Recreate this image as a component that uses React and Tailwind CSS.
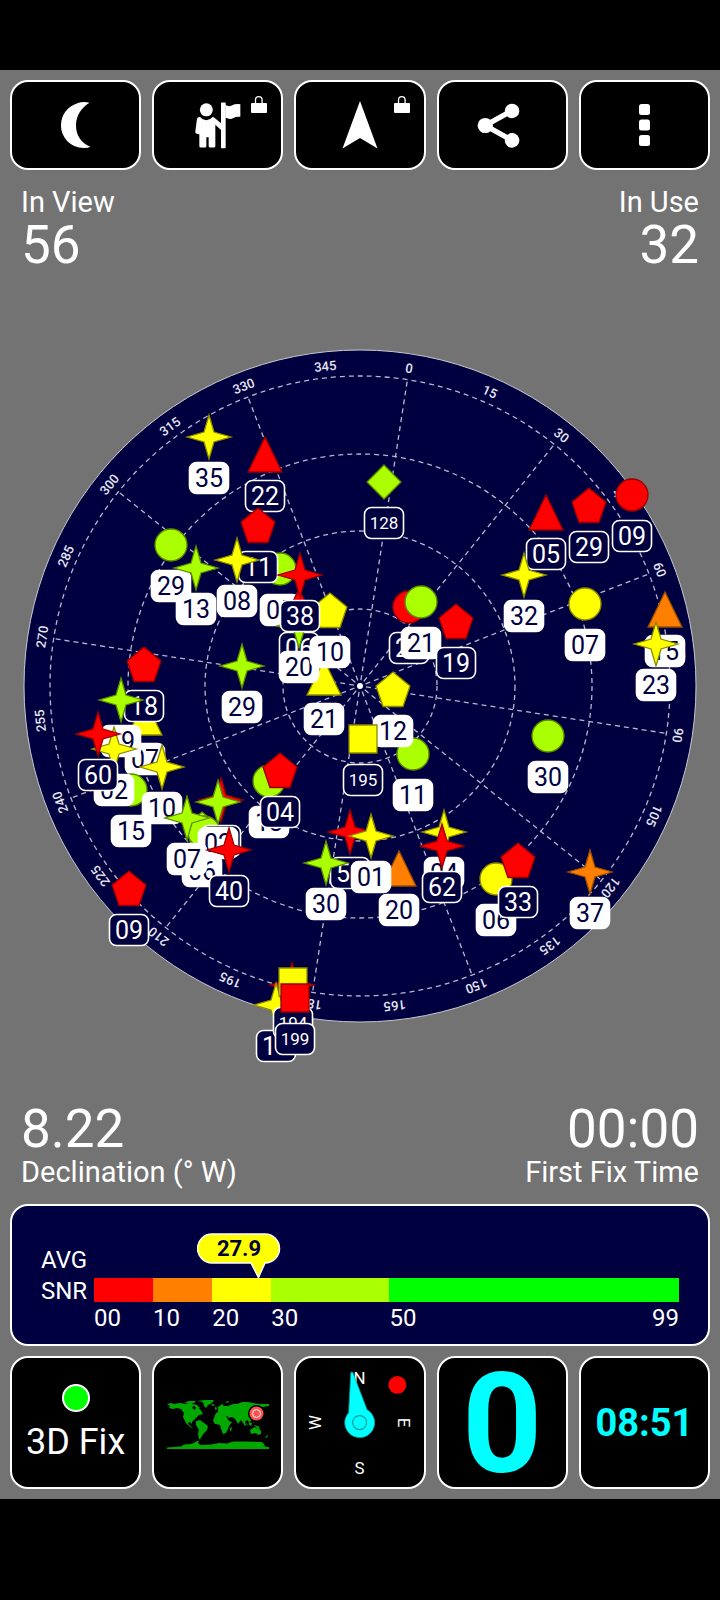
import React from 'react';

const RED = '#ff0000';
const ORANGE = '#ff8000';
const YELLOW = '#ffff00';
const LIME = '#aaff00';

const EDGE = {
  [RED]: '#990000',
  [ORANGE]: '#994d00',
  [YELLOW]: '#8a8a00',
  [LIME]: '#5c8a00',
};

// x and y are measured from the centre of the plot, later entries lie on top
const satellites = [
  { shape: 'star', color: YELLOW, x: -151, y: -249, id: '35', used: true },
  { shape: 'triangle', color: RED, x: -95, y: -231, id: '22' },
  { shape: 'diamond', color: LIME, x: 24, y: -204, id: '128' },
  { shape: 'circle', color: LIME, x: -80, y: -117, id: '05', used: true },
  { shape: 'pentagon', color: RED, x: -102, y: -160, id: '11' },
  { shape: 'circle', color: LIME, x: -189, y: -141, id: '29', used: true },
  { shape: 'star', color: LIME, x: -164, y: -118, id: '13', used: true },
  { shape: 'star', color: YELLOW, x: -123, y: -126, id: '08', used: true },
  { shape: 'triangle', color: YELLOW, x: -36, y: -8, id: '21', used: true },
  { shape: 'triangle', color: RED, x: -61, y: -79, id: '06' },
  { shape: 'star', color: LIME, x: -61, y: -60, id: '20', used: true },
  { shape: 'pentagon', color: YELLOW, x: -30, y: -75, id: '10', used: true },
  { shape: 'star', color: RED, x: -60, y: -111, id: '38' },
  { shape: 'circle', color: RED, x: 49, y: -79, id: '27' },
  { shape: 'circle', color: LIME, x: 61, y: -84, id: '21', used: true },
  { shape: 'pentagon', color: RED, x: 96, y: -64, id: '19' },
  { shape: 'triangle', color: RED, x: 186, y: -173, id: '05' },
  { shape: 'pentagon', color: RED, x: 229, y: -180, id: '29' },
  { shape: 'circle', color: RED, x: 272, y: -191, id: '09' },
  { shape: 'star', color: YELLOW, x: 164, y: -111, id: '32', used: true },
  { shape: 'circle', color: YELLOW, x: 225, y: -82, id: '07', used: true },
  { shape: 'triangle', color: ORANGE, x: 305, y: -76, id: '15', used: true },
  { shape: 'star', color: YELLOW, x: 296, y: -42, id: '23', used: true },
  { shape: 'star', color: LIME, x: -118, y: -20, id: '29', used: true },
  { shape: 'triangle', color: YELLOW, x: -215, y: 32, id: '07', used: true },
  { shape: 'pentagon', color: RED, x: -216, y: -21, id: '18' },
  { shape: 'star', color: LIME, x: -239, y: 14, id: '19', used: true },
  { shape: 'circle', color: LIME, x: -229, y: 104, id: '15', used: true },
  { shape: 'star', color: YELLOW, x: -246, y: 63, id: '02', used: true },
  { shape: 'star', color: RED, x: -262, y: 48, id: '60' },
  { shape: 'star', color: YELLOW, x: -198, y: 81, id: '10', used: true },
  { shape: 'pentagon', color: LIME, x: -158, y: 144, id: '06', used: true },
  { shape: 'circle', color: LIME, x: -156, y: 146 },
  { shape: 'star', color: RED, x: -139, y: 114, id: '02' },
  { shape: 'star', color: LIME, x: -142, y: 116, id: '02', used: true },
  { shape: 'star', color: LIME, x: -173, y: 132, id: '07', used: true },
  { shape: 'star', color: RED, x: -131, y: 164, id: '40' },
  { shape: 'pentagon', color: RED, x: -231, y: 203, id: '09' },
  { shape: 'circle', color: LIME, x: 53, y: 68, id: '11', used: true },
  { shape: 'pentagon', color: YELLOW, x: 33, y: 4, id: '12', used: true },
  { shape: 'square', color: YELLOW, x: 3, y: 53, id: '195' },
  { shape: 'circle', color: LIME, x: -91, y: 95, id: '13', used: true },
  { shape: 'pentagon', color: RED, x: -80, y: 85, id: '04' },
  { shape: 'star', color: RED, x: -10, y: 146, id: '51' },
  { shape: 'triangle', color: ORANGE, x: 39, y: 183, id: '20', used: true },
  { shape: 'star', color: YELLOW, x: 11, y: 150, id: '01', used: true },
  { shape: 'star', color: LIME, x: -34, y: 177, id: '30', used: true },
  { shape: 'star', color: YELLOW, x: 84, y: 146, id: '04', used: true },
  { shape: 'star', color: RED, x: 82, y: 160, id: '62' },
  { shape: 'circle', color: LIME, x: 188, y: 50, id: '30', used: true },
  { shape: 'circle', color: YELLOW, x: 136, y: 193, id: '06', used: true },
  { shape: 'pentagon', color: RED, x: 158, y: 175, id: '33' },
  { shape: 'star', color: ORANGE, x: 230, y: 186, id: '37', used: true },
  { shape: 'star', color: RED, x: -68, y: 299 },
  { shape: 'star', color: YELLOW, x: -84, y: 319, id: '18' },
  { shape: 'square', color: YELLOW, x: -67, y: 296, id: '194' },
  { shape: 'square', color: RED, x: -65, y: 312, id: '199' },
];

const outlines = {
  star: '0,-22 5,-5 22,0 5,5 0,22 -5,5 -22,0 -5,-5',
  triangle: '0,-18 17,17 -17,17',
  pentagon: '0,-18 17,-4 10,16.5 -10,16.5 -17,-4',
  diamond: '0,-17 17,0 0,17 -17,0',
  square: '-14,-14 14,-14 14,14 -14,14',
};

const HEADING = 8.8;
const rings = [77, 155, 232, 310];
const spokes = Array.from({ length: 12 }, (_, i) => i * 30);
const bearings = Array.from({ length: 24 }, (_, i) => i * 15);

const snrBands = [
  { label: '00', span: 10, bar: 'bg-[#ff0000]' },
  { label: '10', span: 10, bar: 'bg-[#ff8000]' },
  { label: '20', span: 10, bar: 'bg-[#ffff00]' },
  { label: '30', span: 20, bar: 'bg-[#aaff00]' },
  { label: '50', end: '99', span: 49, bar: 'bg-[#00ff00]' },
];

function Satellite({ shape, color, x, y, id, used }) {
  return (
    <g transform={`translate(${x} ${y})`}>
      {shape === 'circle' ? (
        <circle r="16" fill={color} stroke={EDGE[color]} strokeWidth="1.3" />
      ) : (
        <polygon points={outlines[shape]} fill={color} stroke={EDGE[color]} strokeWidth="1.3" />
      )}
      {id && (
        <>
          <rect
            x="-19.5"
            y="25.5"
            width="39"
            height="31"
            rx="7"
            fill={used ? '#ffffff' : '#000040'}
            stroke="#ffffff"
            strokeWidth="1.6"
          />
          <text
            y={id.length > 2 ? 47 : 50}
            textAnchor="middle"
            fontSize={id.length > 2 ? 17 : 25}
            fill={used ? '#000040' : '#ffffff'}
          >
            {id}
          </text>
        </>
      )}
    </g>
  );
}

function SkyPlot() {
  return (
    <svg viewBox="-360 -344 720 744" className="mt-[72px] block w-full" role="img" aria-label="Satellite sky view">
      <circle r="336" fill="#000040" stroke="#c8c8d0" strokeWidth="1" />
      <g fill="none" stroke="#b8b8cc" strokeWidth="1.3" strokeDasharray="5 4">
        {rings.map((r) => (
          <circle key={r} r={r} />
        ))}
        {spokes.map((deg) => (
          <line key={deg} y1="-6" y2="-310" transform={`rotate(${deg + HEADING})`} />
        ))}
      </g>
      <circle r="3" fill="#ffffff" />
      <g fill="#e6e6f0" fontSize="13" fontWeight="500" textAnchor="middle">
        {bearings.map((deg) => (
          <text key={deg} y="-317" transform={`rotate(${deg + HEADING})`}>
            {deg}
          </text>
        ))}
      </g>
      {satellites.map((sat, i) => (
        <Satellite key={i} {...sat} />
      ))}
    </svg>
  );
}

function ToolButton({ label, locked, children }) {
  return (
    <button
      aria-label={label}
      className="relative flex h-[90px] items-center justify-center rounded-[18px] border-2 border-white bg-black"
    >
      {children}
      {locked && (
        <svg viewBox="0 0 16 17" className="absolute right-3.5 top-3.5 h-[17px] w-4">
          <rect x="0" y="7" width="16" height="10" rx="1" fill="#fff" />
          <path d="M4.5 7V4a3.3 3.3 0 0 1 6.6 0v3" fill="none" stroke="#fff" strokeWidth="1.3" />
        </svg>
      )}
    </button>
  );
}

function Tile({ label, children }) {
  return (
    <button
      aria-label={label}
      className="flex h-[133px] flex-col items-center justify-center rounded-[18px] border-2 border-white bg-black"
    >
      {children}
    </button>
  );
}

function Stat({ label, value, labelFirst, right }) {
  return (
    <div className={right ? 'flex flex-col text-right' : 'flex flex-col'}>
      {labelFirst && <span className="text-[29px] leading-9">{label}</span>}
      <span className="text-[53px] leading-[50px]">{value}</span>
      {!labelFirst && <span className="text-[29px] leading-9">{label}</span>}
    </div>
  );
}

function SnrPanel() {
  return (
    <section className="mx-2.5 mt-3.5 flex rounded-[18px] border-2 border-white bg-[#000040] px-[29px] pb-3 text-2xl">
      <div className="w-[53px] pt-[39px] leading-[31px]">
        <div>AVG</div>
        <div>SNR</div>
      </div>
      <div className="flex-1 pt-[27px]">
        <div className="relative h-[45px]">
          <svg
            viewBox="0 0 84 46"
            className="absolute left-[28%] top-0 h-[46px] w-[84px] -translate-x-[61px]"
          >
            <path
              d="M15 1h53a14.5 14.5 0 0 1 0 29L61.5 44.5 54 30H15a14.5 14.5 0 0 1 0-29z"
              fill="#ffff00"
              stroke="#fff"
              strokeWidth="1.5"
            />
            <text x="42" y="23" textAnchor="middle" fontSize="22" fontWeight="700" fill="#000040">
              27.9
            </text>
          </svg>
        </div>
        <div className="flex h-6">
          {snrBands.map((band) => (
            <div key={band.label} className={band.bar} style={{ flex: `${band.span} 1 0%` }} />
          ))}
        </div>
        <div className="mt-0.5 flex leading-7">
          {snrBands.map((band) => (
            <div key={band.label} className="flex justify-between" style={{ flex: `${band.span} 1 0%` }}>
              <span>{band.label}</span>
              {band.end && <span>{band.end}</span>}
            </div>
          ))}
        </div>
      </div>
    </section>
  );
}

function WorldMap() {
  return (
    <svg viewBox="0 0 102 49" className="mt-1 h-[49px] w-[102px]">
      <g fill="#00a800">
        <path d="M0 4l4-1 3 1 6-1 6 1 5-1 3 2-2 3 3 2 1-4 3 2 3 4 1 2-4 1-3 3-2 2-2 2 0 2-2-2-2 1 2 3 2 1 1 1-3-1-4-4-3-6 1-4-3-4-4-1-4 1-4-1 1-2z" />
        <path d="M18 2l5-1 6 0-2 2-6 1zM26 4l4 1 3 3-3 0-3-2z" />
        <path d="M30 1l8-1 9 0-2 3-4 2-2 3-2-2-1-4z" />
        <path d="M44 5l2-1 2 1-2 1z" />
        <path d="M29 21l4-1 4 3 4 3-1 4-3 3-2 3-2 3 1 1-2-1-1-5 1-4-3-5z" />
        <path d="M51 10l0-3 4-3 2 2 4 0 5-2 4 0 5-2 6 0 5 1 7 1 9 0v2l-6 1-3 0-3 4-1 3-3 3-2 4-2 1-2-2-2 2 1 3-1 1-2-3-2-3-3 4-1-2-2-3-3-2-3 1-2-2-4 0-3-1-3 0-2 1 1-3 2-1z" />
        <path d="M48 8l1-2 1 3-2 1zM58 2l4-1-1 2z" />
        <path d="M48 15l5-1 6 2 3 5 3 1-3 4-1 3-2 4-3 1-2-5-1-4-5-1-2-3z" />
        <path d="M63 28l2-1-1 4-1 0zM79 22l2 3-1 0zM82 22l3 1-1 3-2-1zM87 25l4 1 2 2-3 0zM87 17l1-3 1 2zM86 20l1 3-1-1z" />
        <path d="M83 30l3-2 2-1 2 2 1-2 3 4 0 3-3 1-2-2-5 1zM98 37l3-2v1l-2 2z" />
        <path d="M0 49v-1.5l14-1 3-2 7-.5 3-1 2-1.5 3-1-1 2 2 2.5 11-.5 8-1.5 8 .5 6-2 14 0 15 .5 2 2 1 2.5 4 .5v2z" />
      </g>
      <circle cx="89.5" cy="13.5" r="8.5" fill="#000" />
      <circle cx="89.5" cy="13.5" r="7" fill="#ff5050" />
      <circle cx="89.5" cy="13.5" r="4" fill="none" stroke="#fff" strokeWidth="1" />
    </svg>
  );
}

function Compass() {
  return (
    <svg viewBox="-64 -64 128 128" className="w-full">
      <g fill="#fff" fontSize="17" textAnchor="middle">
        <text y="-39">N</text>
        <text y="52">S</text>
        <text y="-39" transform="rotate(90)">E</text>
        <text y="-39" transform="rotate(-90)">W</text>
      </g>
      <path
        d="M-8 -51q1.5 0 2.5 4L7.5 -13A15 15 0 1 1 -11 -10L-9 -47q0-4 1-4z"
        fill="#00ffff"
        stroke="#00a8a8"
        strokeWidth="0.8"
      />
      <circle r="7" fill="none" stroke="#009c9c" strokeWidth="1.2" />
      <circle cx="38" cy="-38" r="9" fill="#ff0000" />
    </svg>
  );
}

export default function App() {
  return (
    <div className="min-h-screen bg-black pt-[70px] font-['Roboto',sans-serif] text-white">
      <main className="bg-[#737373] pb-2.5">
        <header className="grid grid-cols-5 gap-[11px] px-2.5 pt-2.5">
          <ToolButton label="Night mode">
            <svg viewBox="0 0 30 46" className="h-[46px] w-[30px]">
              <path
                d="M28.5.7C24-.3 20 0 17 1 7 4 0 12.5 0 23.5S9 46 23 46q4 0 6.5-1.2C20 41 15 33 15 23.5S20 6 28.5.7z"
                fill="#fff"
              />
            </svg>
          </ToolButton>
          <ToolButton label="Waypoints" locked>
            <svg viewBox="585 125 138 140" className="h-[47px] w-[46px]" fill="#fff">
              <circle cx="619" cy="148" r="19.5" />
              <path d="M600 169q8 10 19 10t20-10l6 4 19 16v20l-18-16v64q0 4-5 4h-10q-5 0-5-4v-27h-7v27q0 4-4 4h-12q-5 0-5-4v-36q-13 0-12-8l5-38q1-5 9-6z" />
              <rect x="663" y="126" width="14" height="137" rx="2" />
              <path d="M676 133q10 7 19 2t26-4v38q-14-1-22 4t-23-1z" />
            </svg>
          </ToolButton>
          <ToolButton label="Navigate" locked>
            <svg viewBox="0 0 36 48" className="h-12 w-9">
              <path d="M18 0L35.5 47.5 18 37 .5 47.5z" fill="#fff" />
            </svg>
          </ToolButton>
          <ToolButton label="Share">
            <svg viewBox="351 127 128 136" className="mr-2 h-[45px] w-[43px]" fill="#fff">
              <path d="M456 150L375 195l81 45" fill="none" stroke="#fff" strokeWidth="16" />
              <circle cx="375" cy="195" r="23" />
              <circle cx="456" cy="151" r="22" />
              <circle cx="456" cy="240" r="22" />
            </svg>
          </ToolButton>
          <ToolButton label="Menu">
            <svg viewBox="0 0 11 42" className="h-[42px] w-[11px]" fill="#fff">
              <rect width="11" height="11" rx="2.5" />
              <rect y="15.5" width="11" height="11" rx="2.5" />
              <rect y="31" width="11" height="11" rx="2.5" />
            </svg>
          </ToolButton>
        </header>

        <div className="mt-3.5 flex justify-between px-[21px]">
          <Stat label="In View" value="56" labelFirst />
          <Stat label="In Use" value="32" labelFirst right />
        </div>

        <SkyPlot />

        <div className="mt-[18px] flex justify-between px-[21px]">
          <Stat label="Declination (° W)" value="8.22" />
          <Stat label="First Fix Time" value="00:00" right />
        </div>

        <SnrPanel />

        <footer className="mt-2.5 grid grid-cols-5 gap-[11px] px-2.5">
          <Tile label="Fix status: 3D Fix">
            <span className="h-7 w-7 rounded-full border-2 border-white bg-[#00ff00]" />
            <span className="mt-2.5 whitespace-nowrap text-4xl leading-10">3D Fix</span>
          </Tile>
          <Tile label="World map">
            <WorldMap />
          </Tile>
          <Tile label="Compass">
            <Compass />
          </Tile>
          <Tile label="Speed">
            <span className="pt-1 text-[140px] font-bold leading-[129px] text-[#00ffff]">0</span>
          </Tile>
          <Tile label="Clock">
            <span className="text-[38px] font-bold leading-10 text-[#00ffff]">08:51</span>
          </Tile>
        </footer>
      </main>
    </div>
  );
}
